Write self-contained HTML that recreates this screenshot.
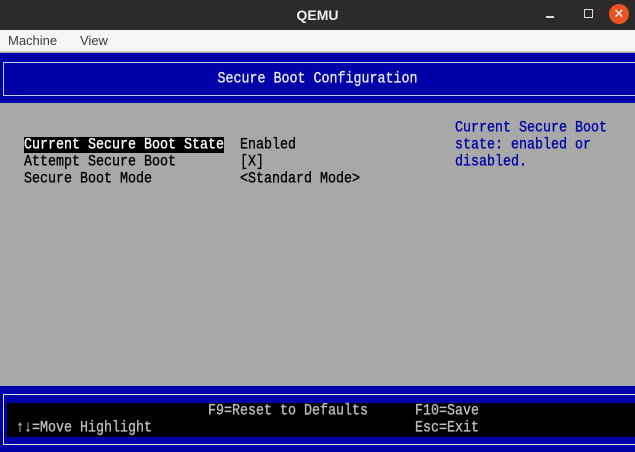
<!DOCTYPE html>
<html><head><meta charset="utf-8"><style>
*{margin:0;padding:0;box-sizing:border-box}
body{width:635px;height:452px;overflow:hidden;background:#a8a8a8;position:relative;font-family:"Liberation Mono",monospace}
.a{position:absolute}
.t{font-size:13.33px;line-height:17px;white-space:pre;font-weight:normal;transform:scaleY(1.18);transform-origin:0 50%;-webkit-text-stroke:0.3px currentColor}
</style></head><body>
<div class="a" style="left:0;top:0;width:635px;height:30px;background:#2c2b2a"></div>
<div class="a" style="left:0;top:7px;width:635px;text-align:center;color:#eee;font:bold 14px 'Liberation Sans',sans-serif">QEMU</div>
<div class="a" style="left:546px;top:16px;width:8px;height:1.5px;background:#ddd"></div>
<div class="a" style="left:584px;top:9px;width:9px;height:9px;border:1.5px solid #ddd"></div>
<div class="a" style="left:609px;top:4px;width:20px;height:20px;border-radius:50%;background:#e95420;color:#fff;font:13px 'Liberation Sans',sans-serif;text-align:center;line-height:20px">✕</div>
<div class="a" style="left:0;top:30px;width:635px;height:22px;background:#f6f6f5;border-bottom:1px solid #d0d0d0"></div>
<div class="a" style="left:8px;top:33px;color:#3c3c3c;font:13px 'Liberation Sans',sans-serif">Machine</div>
<div class="a" style="left:80px;top:33px;color:#3c3c3c;font:13px 'Liberation Sans',sans-serif">View</div>
<div class="a" style="left:0;top:53px;width:635px;height:50px;background:#0000a8"></div>
<div class="a" style="left:3px;top:62px;width:640px;height:34px;border:1px solid #c8c8ff"></div>
<div class="a t" style="left:0;top:71px;width:635px;text-align:center;color:#e8e8e8;transform-origin:50% 50%">Secure Boot Configuration</div>
<div class="a" style="left:24px;top:137px;width:200px;height:16px;background:#000"></div>
<div class="a t" style="left:24px;top:137px;color:#fff">Current Secure Boot State</div>
<div class="a t" style="left:24px;top:154px;color:#000">Attempt Secure Boot</div>
<div class="a t" style="left:24px;top:171px;color:#000">Secure Boot Mode</div>
<div class="a t" style="left:240px;top:137px;color:#000">Enabled</div>
<div class="a t" style="left:240px;top:154px;color:#000">[X]</div>
<div class="a t" style="left:240px;top:171px;color:#000">&lt;Standard Mode&gt;</div>
<div class="a t" style="left:455px;top:120px;color:#0000a8">Current Secure Boot</div>
<div class="a t" style="left:455px;top:137px;color:#0000a8">state: enabled or</div>
<div class="a t" style="left:455px;top:154px;color:#0000a8">disabled.</div>
<div class="a" style="left:0;top:386px;width:635px;height:66px;background:#0000a8"></div>
<div class="a" style="left:3px;top:394px;width:640px;height:51px;border:1px solid #e0e0e0"></div>
<div class="a" style="left:7px;top:403px;width:628px;height:34px;background:#000"></div>
<div class="a t" style="left:208px;top:403px;color:#bdbdbd">F9=Reset to Defaults</div>
<div class="a t" style="left:415px;top:403px;color:#bdbdbd">F10=Save</div>
<div class="a t" style="left:16px;top:420px;color:#bdbdbd">↑↓=Move Highlight</div>
<div class="a t" style="left:415px;top:420px;color:#bdbdbd">Esc=Exit</div>
</body></html>
